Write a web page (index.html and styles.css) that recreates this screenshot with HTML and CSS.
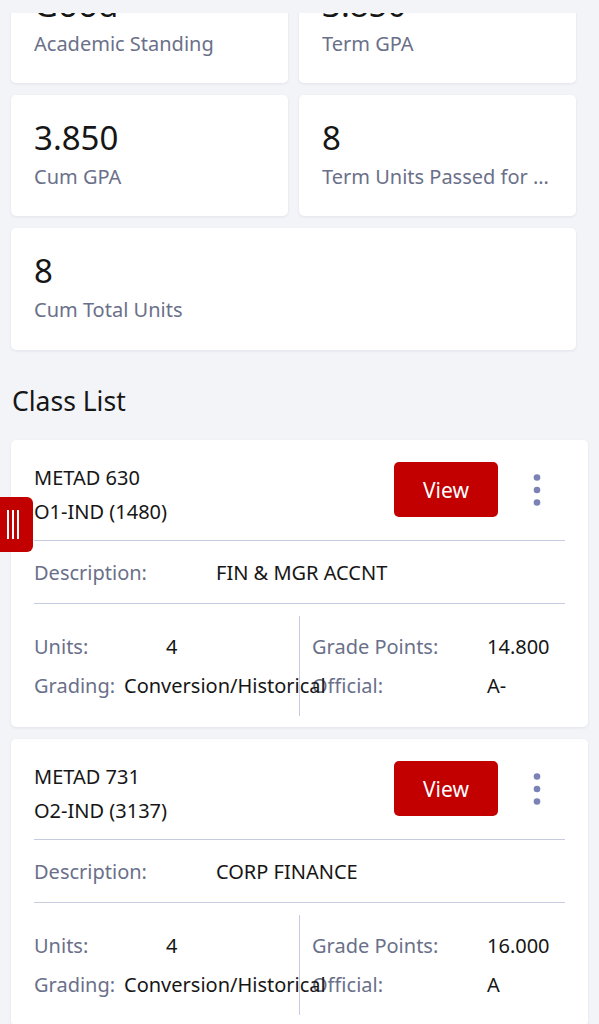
FILE: index.html
```html
<!DOCTYPE html>
<html lang="en">
<head>
<meta charset="utf-8">
<title>Class List</title>
<link rel="stylesheet" href="styles.css">
</head>
<body>
<div class="topbar"></div>
<main class="page">
  <section class="stats">
    <div class="stat"><div class="stat-value">Good</div><div class="stat-label">Academic Standing</div></div>
    <div class="stat"><div class="stat-value">3.850</div><div class="stat-label">Term GPA</div></div>
    <div class="stat"><div class="stat-value">3.850</div><div class="stat-label">Cum GPA</div></div>
    <div class="stat"><div class="stat-value">8</div><div class="stat-label">Term Units Passed for GPA</div></div>
    <div class="stat stat-wide"><div class="stat-value">8</div><div class="stat-label">Cum Total Units</div></div>
  </section>

  <h2 class="section-title">Class List</h2>

  <section class="classes">
    <article class="class-card">
      <div class="class-head">
        <div class="class-name">
          <div>METAD 630</div>
          <div>O1-IND (1480)</div>
        </div>
        <button class="btn-view">View</button>
        <div class="kebab">
          <svg width="8" height="34" viewBox="0 0 8 34"><circle cx="4" cy="4.5" r="3.3"/><circle cx="4" cy="17" r="3.3"/><circle cx="4" cy="29.5" r="3.3"/></svg>
        </div>
      </div>
      <div class="desc-row">
        <span class="lbl desc-lbl">Description:</span>
        <span class="val">FIN &amp; MGR ACCNT</span>
      </div>
      <div class="details">
        <div class="col col-left">
          <div class="kv"><span class="lbl lbl-units">Units:</span><span class="val">4</span></div>
          <div class="kv"><span class="lbl lbl-grading">Grading:</span><span class="val">Conversion/Historical</span></div>
        </div>
        <div class="col col-right">
          <div class="kv"><span class="lbl lbl-right">Grade Points:</span><span class="val">14.800</span></div>
          <div class="kv"><span class="lbl lbl-right">Official:</span><span class="val">A-</span></div>
        </div>
      </div>
    </article>

    <article class="class-card">
      <div class="class-head">
        <div class="class-name">
          <div>METAD 731</div>
          <div>O2-IND (3137)</div>
        </div>
        <button class="btn-view">View</button>
        <div class="kebab">
          <svg width="8" height="34" viewBox="0 0 8 34"><circle cx="4" cy="4.5" r="3.3"/><circle cx="4" cy="17" r="3.3"/><circle cx="4" cy="29.5" r="3.3"/></svg>
        </div>
      </div>
      <div class="desc-row">
        <span class="lbl desc-lbl">Description:</span>
        <span class="val">CORP FINANCE</span>
      </div>
      <div class="details">
        <div class="col col-left">
          <div class="kv"><span class="lbl lbl-units">Units:</span><span class="val">4</span></div>
          <div class="kv"><span class="lbl lbl-grading">Grading:</span><span class="val">Conversion/Historical</span></div>
        </div>
        <div class="col col-right">
          <div class="kv"><span class="lbl lbl-right">Grade Points:</span><span class="val">16.000</span></div>
          <div class="kv"><span class="lbl lbl-right">Official:</span><span class="val">A</span></div>
        </div>
      </div>
    </article>
  </section>
</main>
<div class="drag-handle"><span></span><span></span><span></span></div>
</body>
</html>
```
FILE: styles.css
```css
* { box-sizing: border-box; }
html, body { margin: 0; padding: 0; }
body {
  background: #f2f4f8;
  font-family: "Noto Sans", Roboto, sans-serif;
  color: #161616;
  overflow: hidden;
  height: 1024px;
}
.topbar {
  position: fixed;
  top: 0; left: 0; right: 0;
  height: 13px;
  background: #f3f4f8;
  z-index: 5;
}
.page { margin-top: -38px; }

.stats {
  display: grid;
  grid-template-columns: 1fr 1fr;
  gap: 12px 11px;
  padding: 0 23px 0 11px;
}
.stat {
  background: #fff;
  border-radius: 5px;
  height: 121px;
  padding: 23px 23px 0;
  box-shadow: 0 1px 3px rgba(20, 30, 60, 0.08);
  overflow: hidden;
}
.stat-wide { grid-column: 1 / span 2; height: 122px; }
.stat-value {
  font-size: 33px;
  line-height: 40px;
  color: #161616;
}
.stat-label {
  margin-top: 6px;
  font-size: 20px;
  line-height: 26px;
  color: #6a7089;
  white-space: nowrap;
  overflow: hidden;
  text-overflow: ellipsis;
}

.section-title {
  margin: 35px 0 23px;
  padding-left: 12px;
  font-size: 26.5px;
  line-height: 32px;
  font-weight: 400;
  color: #161616;
}

.classes { padding: 0 11px; }
.class-card {
  background: #fff;
  border-radius: 5px;
  padding: 21px 23px 11px;
  margin-bottom: 12px;
  box-shadow: 0 1px 3px rgba(20, 30, 60, 0.08);
}
.class-head {
  display: flex;
  align-items: flex-start;
  padding-bottom: 11px;
  border-bottom: 1px solid #c6cbe0;
}
.class-name {
  flex: 1;
  font-size: 20px;
  line-height: 34px;
  color: #161616;
}
.btn-view {
  margin-top: 1px;
  width: 104px;
  height: 55px;
  border: 0;
  border-radius: 5px;
  background: #c20000;
  color: #fff;
  font-family: inherit;
  font-size: 21px;
}
.kebab {
  width: 24px;
  height: 55px;
  margin: 1px 16px 0 27px;
  display: flex;
  align-items: center;
  justify-content: center;
}
.kebab svg { fill: #7a82b6; }

.desc-row {
  display: flex;
  align-items: center;
  height: 63px;
  border-bottom: 1px solid #c6cbe0;
  font-size: 20px;
}
.lbl { color: #6a7089; white-space: nowrap; }
.val { color: #161616; white-space: nowrap; }
.desc-lbl { width: 182px; flex: none; }

.details {
  display: grid;
  grid-template-columns: 265px 1fr;
  margin-top: 12px;
  height: 100px;
  font-size: 20px;
}
.col { padding-top: 11px; }
.col-right { border-left: 1px solid #c6cbe0; padding-left: 12px; }
.kv {
  display: flex;
  align-items: center;
  height: 39px;
}
.lbl-units { width: 132px; flex: none; }
.lbl-grading { width: 90px; flex: none; }
.lbl-right { width: 175px; flex: none; }
.col-left .val { position: relative; z-index: 1; }

.drag-handle {
  position: fixed;
  left: 0;
  top: 497px;
  width: 33px;
  height: 55px;
  background: #c20000;
  border-radius: 0 6px 6px 0;
  display: flex;
  align-items: center;
  padding-left: 7px;
  gap: 3px;
  z-index: 6;
}
.drag-handle span {
  width: 2px;
  height: 29px;
  background: #fff;
}
```
